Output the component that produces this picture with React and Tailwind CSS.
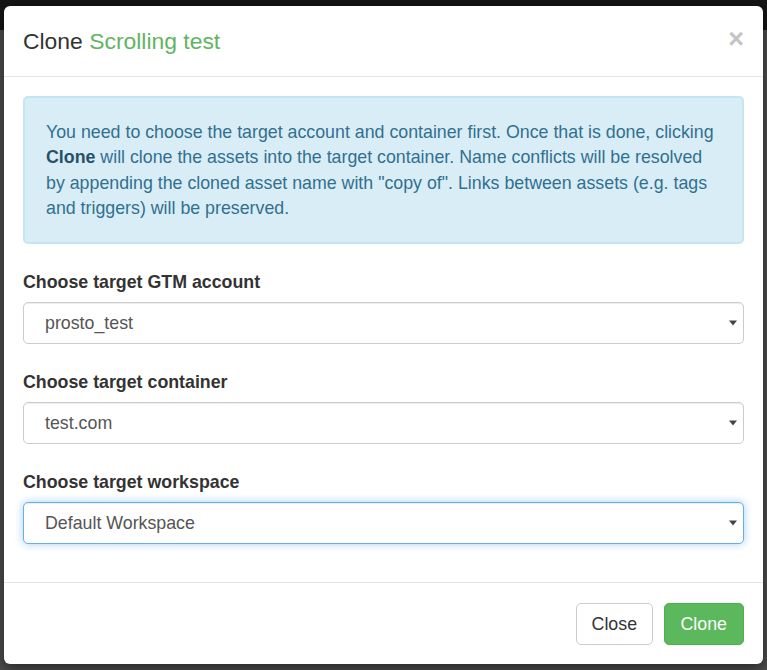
import { useState } from 'react'

const font = { fontFamily: '"Liberation Sans", Arial, Helvetica, sans-serif' }

function Caret() {
  return (
    <svg className="pointer-events-none absolute right-[7px] top-1/2 -translate-y-1/2" width="8" height="6" viewBox="0 0 8 6">
      <path d="M0 0.5h8L4 5.5z" fill="#444" />
    </svg>
  )
}

function FakeSelect({ value, focused }) {
  return (
    <div className="relative">
      <div
        className={`flex h-[42px] items-center rounded-[5px] border bg-white pl-[21px] text-[17.8px] text-[#555] ${
          focused
            ? 'border-[#66afe9] shadow-[inset_0_1px_1px_rgba(0,0,0,0.075),0_0_8px_rgba(102,175,233,0.6)]'
            : 'border-[#ccc] shadow-[inset_0_1px_1px_rgba(0,0,0,0.075)]'
        }`}
      >
        {value}
      </div>
      <Caret />
    </div>
  )
}

function FormGroup({ label, value, focused, className = '' }) {
  return (
    <div className={className}>
      <p className="mb-[7px] text-[17.8px] font-bold leading-[25px] text-[#333]">{label}</p>
      <FakeSelect value={value} focused={focused} />
    </div>
  )
}

export default function App() {
  const [open] = useState(true)

  return (
    <div
      className="h-[670px] w-[767px] overflow-hidden bg-[linear-gradient(to_bottom,#151515_0,#151515_30px,#4c4c4c_30px,#4c4c4c_100%)] px-[4px] pt-[6px]"
      style={font}
    >
      {open ? (
        <div className="flex h-[658px] flex-col rounded-[6px] bg-white shadow-[0_4px_14px_rgba(0,0,0,0.5)]">
          <div className="flex items-start justify-between border-b border-[#e5e5e5] p-[19px]">
            <h4 className="text-[22.9px] leading-[32px] text-[#333]">
              Clone <span className="text-[#62b462]">Scrolling test</span>
            </h4>
            <button className="mt-[-2px] text-[27px] font-bold leading-[32px] text-[#c4c4c4]">×</button>
          </div>

          <div className="p-[19px]">
            <div className="mb-[26px] rounded-[5px] border-2 border-[#c3e6f0] bg-[#d9edf7] px-[21px] pb-[21px] pt-[22px] text-[17.8px] leading-[25.3px] text-[#31708f]">
              You need to choose the target account and container first. Once that is done, clicking{' '}
              <b className="text-[#245269]">Clone</b> will clone the assets into the target container. Name conflicts
              will be resolved by appending the cloned asset name with "copy of". Links between assets (e.g. tags and
              triggers) will be preserved.
            </div>

            <FormGroup label="Choose target GTM account" value="prosto_test" />
            <FormGroup className="mt-[26px]" label="Choose target container" value="test.com" />
            <FormGroup className="mb-[19px] mt-[26px]" label="Choose target workspace" value="Default Workspace" focused />
          </div>

          <div className="flex justify-end gap-[11px] border-t border-[#e5e5e5] px-[19px] pb-[18px] pt-[20px]">
            <button className="h-[42px] rounded-[5px] border border-[#ccc] bg-white px-[14.5px] text-[17.8px] text-[#333]">
              Close
            </button>
            <button className="h-[42px] rounded-[5px] border border-[#4cae4c] bg-[#5cb85c] px-[16px] text-[17.8px] text-white">
              Clone
            </button>
          </div>
        </div>
      ) : null}
    </div>
  )
}
